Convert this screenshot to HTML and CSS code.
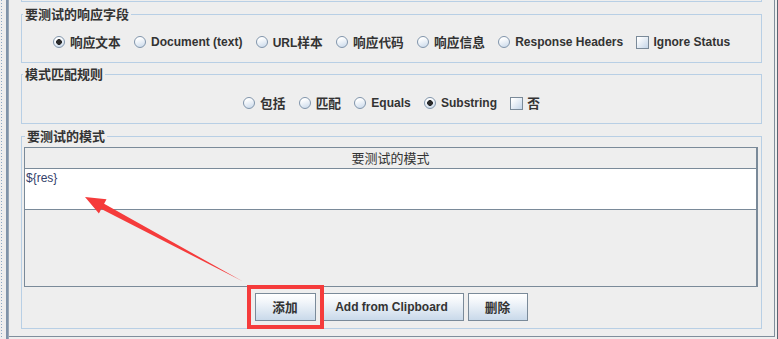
FILE: index.html
```html
<!DOCTYPE html>
<html>
<head>
<meta charset="utf-8">
<link rel="stylesheet" href="styles.css">
</head>
<body>
<div class="page">
  <div class="gutter"><div class="dots"></div><div class="bar"></div></div>
  <div class="main">
    <div class="prev"></div>
    <fieldset class="group g1">
      <legend>要测试的响应字段</legend>
      <div class="opts">
        <label class="opt"><span class="radio on"></span><span class="zh">响应文本</span></label>
        <label class="opt"><span class="radio"></span><span>Document (text)</span></label>
        <label class="opt"><span class="radio"></span><span>URL<span class="zh">样本</span></span></label>
        <label class="opt"><span class="radio"></span><span class="zh">响应代码</span></label>
        <label class="opt"><span class="radio"></span><span class="zh">响应信息</span></label>
        <label class="opt"><span class="radio"></span><span>Response Headers</span></label>
        <label class="opt chk"><span class="check"></span><span>Ignore Status</span></label>
      </div>
    </fieldset>
    <fieldset class="group g2">
      <legend>模式匹配规则</legend>
      <div class="opts center">
        <label class="opt"><span class="radio"></span><span class="zh">包括</span></label>
        <label class="opt"><span class="radio"></span><span class="zh">匹配</span></label>
        <label class="opt"><span class="radio"></span><span>Equals</span></label>
        <label class="opt"><span class="radio on"></span><span>Substring</span></label>
        <label class="opt chk"><span class="check"></span><span class="zh">否</span></label>
      </div>
    </fieldset>
    <fieldset class="group g3">
      <legend>要测试的模式</legend>
      <div class="table">
        <div class="thead">要测试的模式</div>
        <div class="row">${res}</div>
        <div class="empty"></div>
      </div>
      <div class="buttons">
        <button class="btn b1 marked"><span class="zh">添加</span></button>
        <button class="btn b2">Add from Clipboard</button>
        <button class="btn b3"><span class="zh">删除</span></button>
      </div>
    </fieldset>
  </div>
  <div class="edge"></div>
  <svg class="arrow" width="778" height="339" viewBox="0 0 778 339">
    <polygon points="85,197 106.5,199.3 104.1,203.8 243,281.5 101.3,209 98.9,213.5" fill="#f53b3b"/>
  </svg>
</div>
</body>
</html>
```

FILE: styles.css
```css
* { box-sizing: border-box; }
html, body {
  margin: 0;
  width: 778px;
  height: 339px;
  overflow: hidden;
  background: #eeeeee;
}
body {
  font: bold 12px "Liberation Sans", "Noto Sans CJK SC", sans-serif;
  color: #333333;
}
.zh {
  font-family: "Noto Sans CJK SC", sans-serif;
  font-size: 12.7px;
}
.page {
  position: relative;
  display: flex;
  width: 778px;
  height: 339px;
}
.gutter {
  display: flex;
  width: 9px;
  flex: none;
}
.dots {
  margin-left: 1px;
  width: 1px;
  background: repeating-linear-gradient(to bottom, #8ea8c4 0 1px, transparent 1px 3px);
}
.bar {
  margin-left: 4px;
  width: 3px;
  background: linear-gradient(to right, #7f92a8 0 2px, #9aa8b6 2px 3px);
}
.main {
  width: 766px;
  flex: none;
  height: 337px;
  padding: 0 12px 7px 12px;
  border-right: 1px solid #808e9c;
  border-bottom: 1px solid #808e9c;
}
.edge {
  width: 3px;
  flex: none;
  border-right: 1px solid #5b6673;
}
.prev {
  height: 2px;
  border: 1px solid #b8cfe5;
  border-top: none;
}
.group {
  margin: 0;
  border: 1px solid #b8cfe5;
  min-width: 0;
}
.group legend {
  padding: 0 2px;
  margin-left: 1px;
  font-family: "Noto Sans CJK SC", sans-serif;
  font-size: 13px;
  font-weight: bold;
  line-height: 14px;
  color: #333;
}
.group.g1 { margin-top: 5px; padding: 11px 0 10px 0; }
.group.g2 { margin-top: 4px; padding: 12px 0 10px 0; }
.group.g3 { margin-top: 5px; padding: 4px 3px 7px 2px; }
.opts {
  display: flex;
  align-items: center;
  height: 20px;
  gap: 13.3px;
  padding-left: 31px;
  white-space: nowrap;
}
.opts.center {
  justify-content: center;
  padding-left: 0;
}
.opt {
  display: flex;
  align-items: center;
  gap: 5px;
  line-height: 20px;
}
.opt.chk { gap: 4px; }
.radio {
  width: 12px;
  height: 12px;
  border-radius: 50%;
  border: 1px solid #8195ab;
  background: linear-gradient(160deg, #ffffff 20%, #c8d8ea 100%);
  flex: none;
}
.radio.on {
  background:
    radial-gradient(circle at 50% 50%, #2b2b2b 0 2.6px, transparent 3.1px),
    linear-gradient(160deg, #ffffff 20%, #c8d8ea 100%);
}
.check {
  width: 13px;
  height: 13px;
  border: 1px solid #7a8a99;
  background: linear-gradient(135deg, #ffffff 10%, #c4d5e8 100%);
  flex: none;
}
.table {
  height: 140px;
  border: 1px solid #7a8a99;
  border-right-width: 2px;
  display: flex;
  flex-direction: column;
}
.thead {
  height: 21px;
  flex: none;
  border-bottom: 1px solid #7a8a99;
  text-align: center;
  font-family: "Noto Sans CJK SC", sans-serif;
  font-size: 13px;
  font-weight: normal;
  line-height: 20px;
  color: #333;
  background: #eeeeee;
}
.row {
  height: 41px;
  flex: none;
  background: #ffffff;
  border-bottom: 1px solid #7a8a99;
  font-family: "Liberation Sans", sans-serif;
  font-weight: normal;
  font-size: 12px;
  line-height: 16px;
  padding: 1px 0 0 1px;
  color: #33406a;
}
.empty { flex: 1; }
.buttons {
  display: flex;
  justify-content: center;
  gap: 4px;
  margin-top: 6px;
}
.btn {
  height: 28px;
  border: 1px solid #7a8a99;
  background: linear-gradient(to bottom, #ffffff 0%, #f2f6fa 30%, #c9d9ea 100%);
  font: bold 12px "Liberation Sans", "Noto Sans CJK SC", sans-serif;
  color: #333;
  padding: 0;
  line-height: 26px;
}
.b1 { width: 61px; }
.b2 { width: 144px; }
.b3 { width: 60px; }
.marked {
  outline: 4px solid #f53b3b;
  outline-offset: 4px;
  position: relative;
  z-index: 1;
}
.arrow {
  position: absolute;
  left: 0;
  top: 0;
  pointer-events: none;
}
```
